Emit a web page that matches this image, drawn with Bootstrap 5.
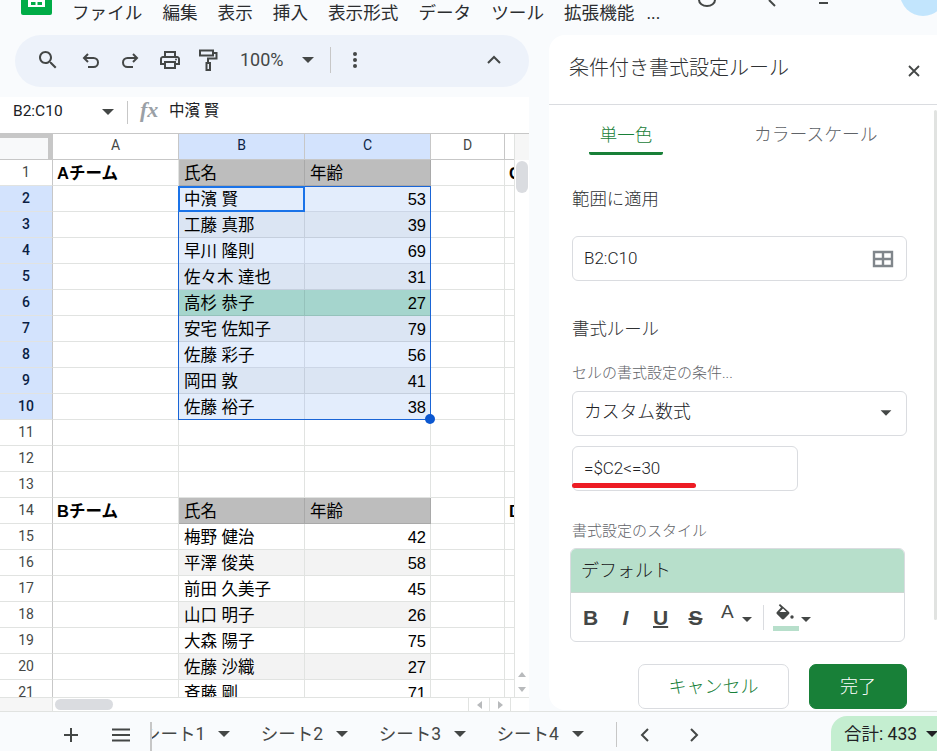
<!DOCTYPE html>
<html lang="ja">
<head>
<meta charset="utf-8">
<title>条件付き書式設定ルール</title>
<link href="https://cdn.jsdelivr.net/npm/bootstrap@5.3.0/dist/css/bootstrap.min.css" rel="stylesheet">
<style>
html,body{height:100%;overflow:hidden}
body{background:#f9fbfd;font-family:Roboto,"Noto Sans CJK JP",sans-serif;color:#202124}
.app{width:937px;height:751px}
.ink{fill:#444746}
.tri{display:inline-block;width:0;height:0;border-left:6px solid transparent;border-right:6px solid transparent;border-top:6px solid #444746}
/* top */
.topbar{height:35px;overflow:hidden}
.logo-mark{width:31px;height:15px;margin-left:21px;flex:none}
.menu-row{margin-left:20px;font-size:17.6px;line-height:24px;margin-top:1px;gap:20px;color:#2b2d30;white-space:nowrap}
.menu-row span:last-child{margin-left:-8px}
.top-right{margin-left:auto}
.avatar-disc{width:46px;height:46px;border-radius:50%;background:#c2e5fd;margin-top:-30px;margin-right:-9px;margin-left:72px;flex:none}
.top-glyph{flex:none}
/* left */
.main-row{height:676px}
.left-col{width:529px;flex:none}
.tool-pill{margin-left:15px;width:514px;height:52px;border-radius:26px;background:#edf2fa;flex:none;padding-bottom:3px}
.tool-pill svg{width:24px;height:24px;flex:none}
.t1{margin-left:21px}.t2{margin-left:19px}.t3{margin-left:15px}.t4{margin-left:16px}.t5{margin-left:14px}
.zoom-txt{margin-left:20px;font-size:18px;color:#444746;width:46px}
.t6{margin-left:16px}
.tool-sep{width:1px;height:26px;background:#c7c7c7;margin-left:16px}
.t7{margin-left:12px}
.t8{margin-left:auto;margin-right:23px}
.formula-row{height:37px;margin-top:10px;background:#fff;border-bottom:1px solid #c7c7c7;flex:none;font-size:15.500px;padding-bottom:6px}
.name-box{width:89px;margin-left:13px}
.formula-sep{width:1px;height:23px;background:#c7c7c7;margin-left:13px}
.fx-mark{font-family:"Liberation Serif",serif;font-style:italic;font-weight:700;font-size:22px;color:#9aa0a6;margin-left:12px;margin-top:-4px;width:29px;line-height:1}
/* grid */
.grid-row{height:563px;flex:none}
.grid-view{width:514px;height:563px;overflow:hidden;position:relative;background:#fff;flex:none}
.scroll-col{width:15px;background:#fff;border-left:1px solid #e1e3e1}
.scroll-cap{height:26px;background:#f6f6f6}
.v-thumb{width:12px;height:32px;margin:1px 0 0 1px;border-radius:6px;background:#dadce0}
.v-arrows{margin-top:auto;margin-bottom:5px;gap:10px}
.tri-up,.tri-down,.tri-left,.tri-right{display:block;width:0;height:0;border:4px solid transparent}
.tri-up{border-bottom:5px solid #b8babc;border-top:0;margin:0 auto}
.tri-down{border-top:5px solid #b8babc;border-bottom:0;margin:0 auto}
.tri-left{border-right:5px solid #b8babc;border-left:0}
.tri-right{border-left:5px solid #b8babc;border-right:0}
table.sheet-grid{table-layout:fixed;width:565px;margin:0;border-collapse:separate;border-spacing:0;font-family:"Liberation Sans","Noto Sans CJK JP",sans-serif;font-size:16.5px}
table.sheet-grid>thead>tr>th,table.sheet-grid>tbody>tr>td,table.sheet-grid>tbody>tr>th{height:26px;padding:1px 5px 0;line-height:24px;border-width:0 1px 1px 0;border-style:solid;border-color:#e1e3e1;color:#000;white-space:nowrap;overflow:hidden;background:#fff;font-weight:400;box-shadow:none}
table.sheet-grid>thead>tr>th{height:26px;padding:0 5px 3px;line-height:22px;text-align:center;font-size:14px;color:#444746;border-color:#c7c7c7;font-family:Roboto,sans-serif}
table.sheet-grid>thead>tr>th.corner-cell{background:#c7c7c7;padding:0;position:relative}
.corner-fill{display:block;width:48px;height:21px;background:#f8f9fa}
table.sheet-grid>tbody>tr>th{text-align:center;font-size:14px;line-height:25px;color:#444746;padding:0;border-right-color:#c7c7c7;font-family:Roboto,sans-serif}
table.sheet-grid>thead>tr>th.col-on,table.sheet-grid>tbody>tr>th.row-on{background:#d3e3fd;color:#0b1f45;font-weight:500}
table.sheet-grid>thead>tr>th.col-on{font-weight:400}
table.sheet-grid>tbody>tr>td.hd-gray{background:#bdbdbd;border-color:#a9a9a9}
table.sheet-grid>tbody>tr>td.band-a{background:#e3edfc;border-color:#ccd6e6}
table.sheet-grid>tbody>tr>td.band-b{background:#dbe5f3;border-color:#c5cfdd}
table.sheet-grid>tbody>tr>td.band-hit{background:#a5d5cd;border-color:#95c2bb}
table.sheet-grid>tbody>tr>td.band-z{background:#f3f3f3}
table.sheet-grid>tbody>tr>td.num{text-align:right;padding-right:4px}
table.sheet-grid>tbody>tr>td.team{font-weight:700;padding-left:4px}
.range-box{position:absolute;left:178px;top:52px;width:253px;height:234px;border:1px solid #1a65d6;pointer-events:none}
.active-box{position:absolute;left:178px;top:52px;width:127px;height:26px;border:2px solid #1a73e8;pointer-events:none}
.fill-handle{position:absolute;left:425px;top:280px;width:10px;height:10px;border-radius:50%;background:#0b57d0}
.h-scroll{height:14px;background:#fff;width:529px;border-top:1px solid #e1e3e1;flex:none}
.h-cap{width:53px;background:#f6f6f6;border-right:1px solid #e1e3e1;flex:none}
.h-thumb{width:58px;height:11px;background:#dadce0;border-radius:6px;margin-left:2px;margin-top:1px}
.h-arrows{margin-left:auto;width:46px;margin-right:15px;border-left:1px solid #e1e3e1}
.h-arrows span.cellbox{width:21px;height:13px;border-right:1px solid #e1e3e1}
/* panel */
.rule-panel{margin-left:20px;width:388px;height:675px;background:#fff;border-radius:16px 0 0 16px;position:relative;overflow:hidden;flex:none}
.panel-head{height:70px;border-bottom:1px solid #dadce0;padding-left:20px}
.panel-title{font-size:20px;font-weight:300;color:#2f3133;line-height:28px;margin-top:-3px}
.panel-close{margin-left:auto;margin-right:15px;width:16px;height:16px;margin-top:3px}
.panel-body{padding-left:23px;width:358px;font-weight:300}
.panel-strip{position:absolute;right:0;top:75px;width:3px;height:510px;background:#e1e3e1;border-radius:2px}
.tab-row{height:50px;padding-left:17px}
.tab-on{width:74px;height:50px;border-bottom:3px solid #188038;border-radius:0 0 2px 2px;color:#188038;font-size:17.5px;line-height:60px;text-align:center}
.tab-off{margin-left:91px;font-size:17.8px;line-height:60px;color:#5f6368}
.sec-label{font-size:17.4px;line-height:24px;color:#2f3133}
.sub-label{font-size:15px;line-height:20px;color:#5f6368}
.lb-a{margin-top:32px}.lb-b{margin-top:36px}.lb-c{margin-top:22px}.lb-d{margin-top:30px}
.rule-field.form-control{height:45px;width:335px;border:1px solid #dadce0;border-radius:6px;padding:0 11px;font-size:17px;font-weight:300;color:#202124;background:#fff}
.fd-a{margin-top:25px}
.fd-a span{padding-top:1px}
.fd-a svg{margin-right:1px}
.rule-field.fd-b{margin-top:8px;font-size:17.800px;padding-bottom:2px}
.fd-b .tri{margin-top:0;margin-right:3px;transform:scale(.9)}
.rule-field.fd-c{margin-top:10px;width:226px;font-size:17px}
.style-box{margin-top:7px;margin-left:-2px;width:335px;height:94px;border:1px solid #dadce0;border-radius:6px;overflow:hidden}
.style-preview{height:44px;background:#b7dfcb;padding-left:10px;font-size:18px;border-bottom:1px solid #c9d6cf}
.style-tools{height:48px;padding-left:12px;color:#444746;font-family:"Liberation Sans",sans-serif}
.fmt-g{width:15px;text-align:center;font-weight:700;font-size:21px;line-height:1;color:#444746;margin-right:20px}
.fmt-i{font-style:italic}.fmt-u{text-decoration:underline;text-decoration-thickness:2px}.fmt-s{text-decoration:line-through;text-decoration-thickness:2px}
.fmt-a{font-weight:400;font-size:19px;line-height:1;margin-top:-11px;margin-left:-2px;color:#444746}
.tri-sm{display:inline-block;width:0;height:0;border-left:5px solid transparent;border-right:5px solid transparent;border-top:5px solid #444746;margin-left:8px;margin-top:5px}
.fmt-sep{width:1px;height:25px;background:#dadce0;margin-left:11px;margin-right:9px}
.fill-swatch{width:26px}
.fill-swatch svg{margin-left:3px}
.fill-bar{height:5px;background:#b7dfcb;margin-top:2px}
.fill-swatch + .tri-sm{margin-left:2px}
.action-row{margin-top:22px;margin-left:66px;gap:20px}
.action-row .btn{height:45px;border-radius:7px;font-size:18px;font-weight:300;padding:0}
.btn-cancel.btn{width:151px;background:#fff;border:1px solid #dadce0;color:#188038}
.btn-done.btn{width:98px;background:#188038;border:1px solid #188038;color:#fff}
.red-mark{position:absolute;left:-1px;bottom:2px;width:124px;height:5px;background:#ed1c24;border-radius:3px}
/* bottom */
.bottom-bar{height:40px;border-top:1px solid #e1e3e1;margin-top:0;flex:none;font-size:17.5px;color:#444746}
.bt-plus{margin-left:59px;width:24px;height:24px;flex:none;margin-top:11px}
.bt-menu{margin-left:26px;width:24px;height:24px;flex:none;margin-top:11px}
.tab-track{margin-left:17px;width:454px;height:29px;overflow:hidden;border-left:2px solid #c7c7c7;margin-top:10px;padding-bottom:5px;flex:none;white-space:nowrap;line-height:24px;gap:30.500px}
.sheet-tab{gap:13px;flex:none;color:#444746}
.sheet-first{margin-left:-9px}
.bar-sep{width:1px;height:25px;background:#c7c7c7;margin-left:12px;margin-top:10px}
.nav-l{margin-left:16px;width:24px;height:24px;margin-top:11px}
.nav-r{margin-left:25px;width:24px;height:24px;margin-top:11px}
.sum-pill{margin-left:auto;margin-top:4px;width:106px;height:36px;background:#c4eed0;border-radius:16px 0 0 0;padding-left:13px;font-size:17.500px;color:#202124;white-space:nowrap;overflow:hidden;flex:none}
.sum-pill .tri{margin-left:9px;border-top-color:#202124}
</style>
</head>
<body>
<div class="app d-flex flex-column">
  <div class="topbar d-flex">
    <svg class="logo-mark" viewBox="0 0 31 15" aria-hidden="true"><rect x="0" y="-20" width="31" height="35" rx="2" fill="#00ac47"/><path d="M7-2h17v9H7z" fill="#fff"/><path d="M10-2h4.500v2H10zM16.500-2H21v2h-4.500zM10 2h4.500v3H10zM16.500 2H21v3h-4.500z" fill="#00ac47"/></svg>
    <div class="menu-row d-flex">
      <span>ファイル</span><span>編集</span><span>表示</span><span>挿入</span><span>表示形式</span><span>データ</span><span>ツール</span><span>拡張機能</span><span>...</span>
    </div>
    <div class="top-right d-flex align-items-start">
      <svg class="top-glyph" width="130" height="10" viewBox="0 0 130 10" aria-hidden="true"><path d="M1 0a8 6 0 0 0 16 0" fill="none" stroke="#444746" stroke-width="2"/><path d="M71 0l6 6" fill="none" stroke="#444746" stroke-width="2"/><path d="M121 3h17" fill="none" stroke="#444746" stroke-width="2"/></svg>
      <div class="avatar-disc"></div>
    </div>
  </div>

  <div class="main-row d-flex">
    <div class="left-col d-flex flex-column">
      <div class="tool-pill d-flex align-items-center">
        <svg class="t1" viewBox="0 0 24 24" aria-hidden="true"><path class="ink" d="M15.500 14h-.79l-.28-.27C15.410 12.590 16 11.110 16 9.500 16 5.910 13.090 3 9.500 3S3 5.910 3 9.500 5.910 16 9.500 16c1.610 0 3.090-.59 4.230-1.570l.27.28v.79l5 4.990L20.490 19l-4.990-5zm-6 0C7.010 14 5 11.990 5 9.500S7.010 5 9.500 5 14 7.010 14 9.500 11.990 14 9.500 14z"/></svg>
        <svg class="t2" viewBox="0 0 24 24" aria-hidden="true"><path d="M9 6 5 10l4 4M5 10h9.500a4.500 4.500 0 0 1 0 9H9" fill="none" stroke="#444746" stroke-width="2"/></svg>
        <svg class="t3" viewBox="0 0 24 24" aria-hidden="true"><path d="M15 6l4 4-4 4M19 10H9.500a4.500 4.500 0 0 0 0 9H15" fill="none" stroke="#444746" stroke-width="2"/></svg>
        <svg class="t4" viewBox="0 0 24 24" aria-hidden="true"><path class="ink" d="M19 8h-1V3H6v5H5c-1.660 0-3 1.340-3 3v6h4v4h12v-4h4v-6c0-1.660-1.340-3-3-3zM8 5h8v3H8V5zm8 14H8v-4h8v4zm4-4h-2v-2H6v2H4v-4c0-.55.45-1 1-1h14c.55 0 1 .45 1 1v4z"/><circle class="ink" cx="18" cy="11.500" r="1"/></svg>
        <svg class="t5" viewBox="0 0 24 24" aria-hidden="true"><path d="M4 2.500h13v5H4zM17 5h3.500v5.500H12V15" fill="none" stroke="#444746" stroke-width="2"/><rect x="10.500" y="15" width="3.500" height="7" fill="none" stroke="#444746" stroke-width="2"/></svg>
        <span class="zoom-txt">100%</span>
        <span class="tri t6"></span>
        <span class="tool-sep"></span>
        <svg class="t7" viewBox="0 0 24 24" aria-hidden="true"><circle class="ink" cx="12" cy="6" r="2"/><circle class="ink" cx="12" cy="12" r="2"/><circle class="ink" cx="12" cy="18" r="2"/></svg>
        <svg class="t8" viewBox="0 0 24 24" aria-hidden="true"><path d="M6 15l6-6 6 6" fill="none" stroke="#444746" stroke-width="2"/></svg>
      </div>

      <div class="formula-row d-flex align-items-center">
        <span class="name-box">B2:C10</span>
        <span class="tri"></span>
        <span class="formula-sep"></span>
        <span class="fx-mark">fx</span>
        <span>中濱 賢</span>
      </div>

      <div class="grid-row d-flex">
        <div class="grid-view">
          <table class="table sheet-grid">
            <colgroup><col style="width:53px"><col style="width:126px"><col style="width:126px"><col style="width:126px"><col style="width:74px"><col style="width:60px"></colgroup>
            <thead><tr><th class="corner-cell"><span class="corner-fill"></span></th><th>A</th><th class="col-on">B</th><th class="col-on">C</th><th>D</th><th></th></tr></thead>
            <tbody id="rows"></tbody>
          </table>
          <div class="range-box"></div>
          <div class="active-box"></div>
          <div class="fill-handle"></div>
        </div>
        <div class="scroll-col d-flex flex-column">
          <div class="scroll-cap"></div>
          <div class="v-thumb"></div>
          <div class="v-arrows d-flex flex-column"><span class="tri-up"></span><span class="tri-down"></span></div>
        </div>
      </div>

      <div class="h-scroll d-flex">
        <div class="h-cap"></div>
        <div class="h-thumb"></div>
        <div class="h-arrows d-flex">
          <span class="cellbox d-flex align-items-center justify-content-center"><span class="tri-left"></span></span>
          <span class="cellbox d-flex align-items-center justify-content-center"><span class="tri-right"></span></span>
        </div>
      </div>
    </div>

    <div class="rule-panel">
      <div class="panel-head d-flex align-items-center">
        <span class="panel-title">条件付き書式設定ルール</span>
        <svg class="panel-close" viewBox="0 0 16 16" aria-hidden="true"><path d="M3 3l10 10M13 3 3 13" stroke="#444746" stroke-width="1.800" fill="none"/></svg>
      </div>
      <div class="panel-strip"></div>
      <div class="panel-body">
        <div class="tab-row d-flex">
          <div class="tab-on">単一色</div>
          <div class="tab-off">カラースケール</div>
        </div>
        <div class="sec-label lb-a">範囲に適用</div>
        <div class="form-control rule-field fd-a d-flex align-items-center justify-content-between">
          <span>B2:C10</span>
          <svg width="22" height="18" viewBox="0 0 22 18" aria-hidden="true"><path d="M2 2h18v14H2zM11 2v14M2 9h18" fill="none" stroke="#80868b" stroke-width="2.400"/></svg>
        </div>
        <div class="sec-label lb-b">書式ルール</div>
        <div class="sub-label lb-c">セルの書式設定の条件...</div>
        <div class="form-control rule-field fd-b d-flex align-items-center justify-content-between">
          <span>カスタム数式</span><span class="tri"></span>
        </div>
        <div class="form-control rule-field fd-c d-flex align-items-center position-relative">
          <span>=$C2&lt;=30</span>
          <span class="red-mark"></span>
        </div>
        <div class="sub-label lb-d">書式設定のスタイル</div>
        <div class="style-box">
          <div class="style-preview d-flex align-items-center">デフォルト</div>
          <div class="style-tools d-flex align-items-center">
            <span class="fmt-g">B</span>
            <span class="fmt-g fmt-i">I</span>
            <span class="fmt-g fmt-u">U</span>
            <span class="fmt-g fmt-s">S</span>
            <span class="fmt-a">A</span><span class="tri-sm"></span>
            <span class="fmt-sep"></span>
            <span class="fill-swatch d-block">
              <svg class="d-block" width="20" height="20" viewBox="0 0 20 20" aria-hidden="true"><path class="ink" d="M4 0 2.800 1.200 5 3.500.9 7.900c-.6.6-.6 1.500 0 2.100l5 5c.6.6 1.500.6 2.100 0l5-5c.6-.6.6-1.500 0-2.100zM3.500 8 7 4.400 10.500 8z"/><circle class="ink" cx="16" cy="13" r="1.700"/></svg>
              <span class="fill-bar d-block"></span>
            </span>
            <span class="tri-sm"></span>
          </div>
        </div>
        <div class="action-row d-flex">
          <button type="button" class="btn btn-cancel">キャンセル</button>
          <button type="button" class="btn btn-done">完了</button>
        </div>
      </div>
    </div>
  </div>

  <div class="bottom-bar d-flex">
    <svg class="bt-plus" viewBox="0 0 24 24" aria-hidden="true"><path d="M12 5v14M5 12h14" stroke="#444746" stroke-width="2" fill="none"/></svg>
    <svg class="bt-menu" viewBox="0 0 24 24" aria-hidden="true"><path d="M3 6.500h18M3 12h18M3 17.500h18" stroke="#444746" stroke-width="2" fill="none"/></svg>
    <div class="tab-track d-flex">
      <div class="sheet-tab sheet-first d-flex align-items-center"><span>シート1</span><span class="tri"></span></div>
      <div class="sheet-tab d-flex align-items-center"><span>シート2</span><span class="tri"></span></div>
      <div class="sheet-tab d-flex align-items-center"><span>シート3</span><span class="tri"></span></div>
      <div class="sheet-tab d-flex align-items-center"><span>シート4</span><span class="tri"></span></div>
    </div>
    <span class="bar-sep"></span>
    <svg class="nav-l" viewBox="0 0 24 24" aria-hidden="true"><path d="M15 6l-6 6 6 6" stroke="#444746" stroke-width="2" fill="none"/></svg>
    <svg class="nav-r" viewBox="0 0 24 24" aria-hidden="true"><path d="M9 6l6 6-6 6" stroke="#444746" stroke-width="2" fill="none"/></svg>
    <div class="sum-pill d-flex align-items-center"><span>合計: 433</span><span class="tri"></span></div>
  </div>
</div>
<script>
var t1=[["中濱 賢",53],["工藤 真那",39],["早川 隆則",69],["佐々木 達也",31],["高杉 恭子",27],["安宅 佐知子",79],["佐藤 彩子",56],["岡田 敦",41],["佐藤 裕子",38]];
var t2=[["梅野 健治",42],["平澤 俊英",58],["前田 久美子",45],["山口 明子",26],["大森 陽子",75],["佐藤 沙織",27],["斉藤 剛",71]];
var h='';
function row(n,on,a,bc,b,c,d,e,cls){
  h+='<tr><th class="'+(on?'row-on':'')+'">'+n+'</th><td class="team">'+a+'</td><td class="'+cls+'">'+b+'</td><td class="'+cls+' num">'+c+'</td><td></td><td class="team">'+e+'</td></tr>';
}
row(1,false,'Aチーム','', '氏名','<span class="float-start">年齢</span>','','C','hd-gray');
t1.forEach(function(r,i){row(i+2,true,'','',r[0],r[1],'','',r[1]==27?'band-hit':(i%2?'band-b':'band-a'));});
[11,12,13].forEach(function(n){row(n,false,'','','','','','','');});
row(14,false,'Bチーム','','氏名','<span class="float-start">年齢</span>','','D','hd-gray');
t2.forEach(function(r,i){row(i+15,false,'','',r[0],r[1],'','',i%2?'band-z':'');});
document.getElementById('rows').innerHTML=h;
</script>
<script src="https://cdn.jsdelivr.net/npm/bootstrap@5.3.0/dist/js/bootstrap.bundle.min.js"></script>
</body>
</html>
